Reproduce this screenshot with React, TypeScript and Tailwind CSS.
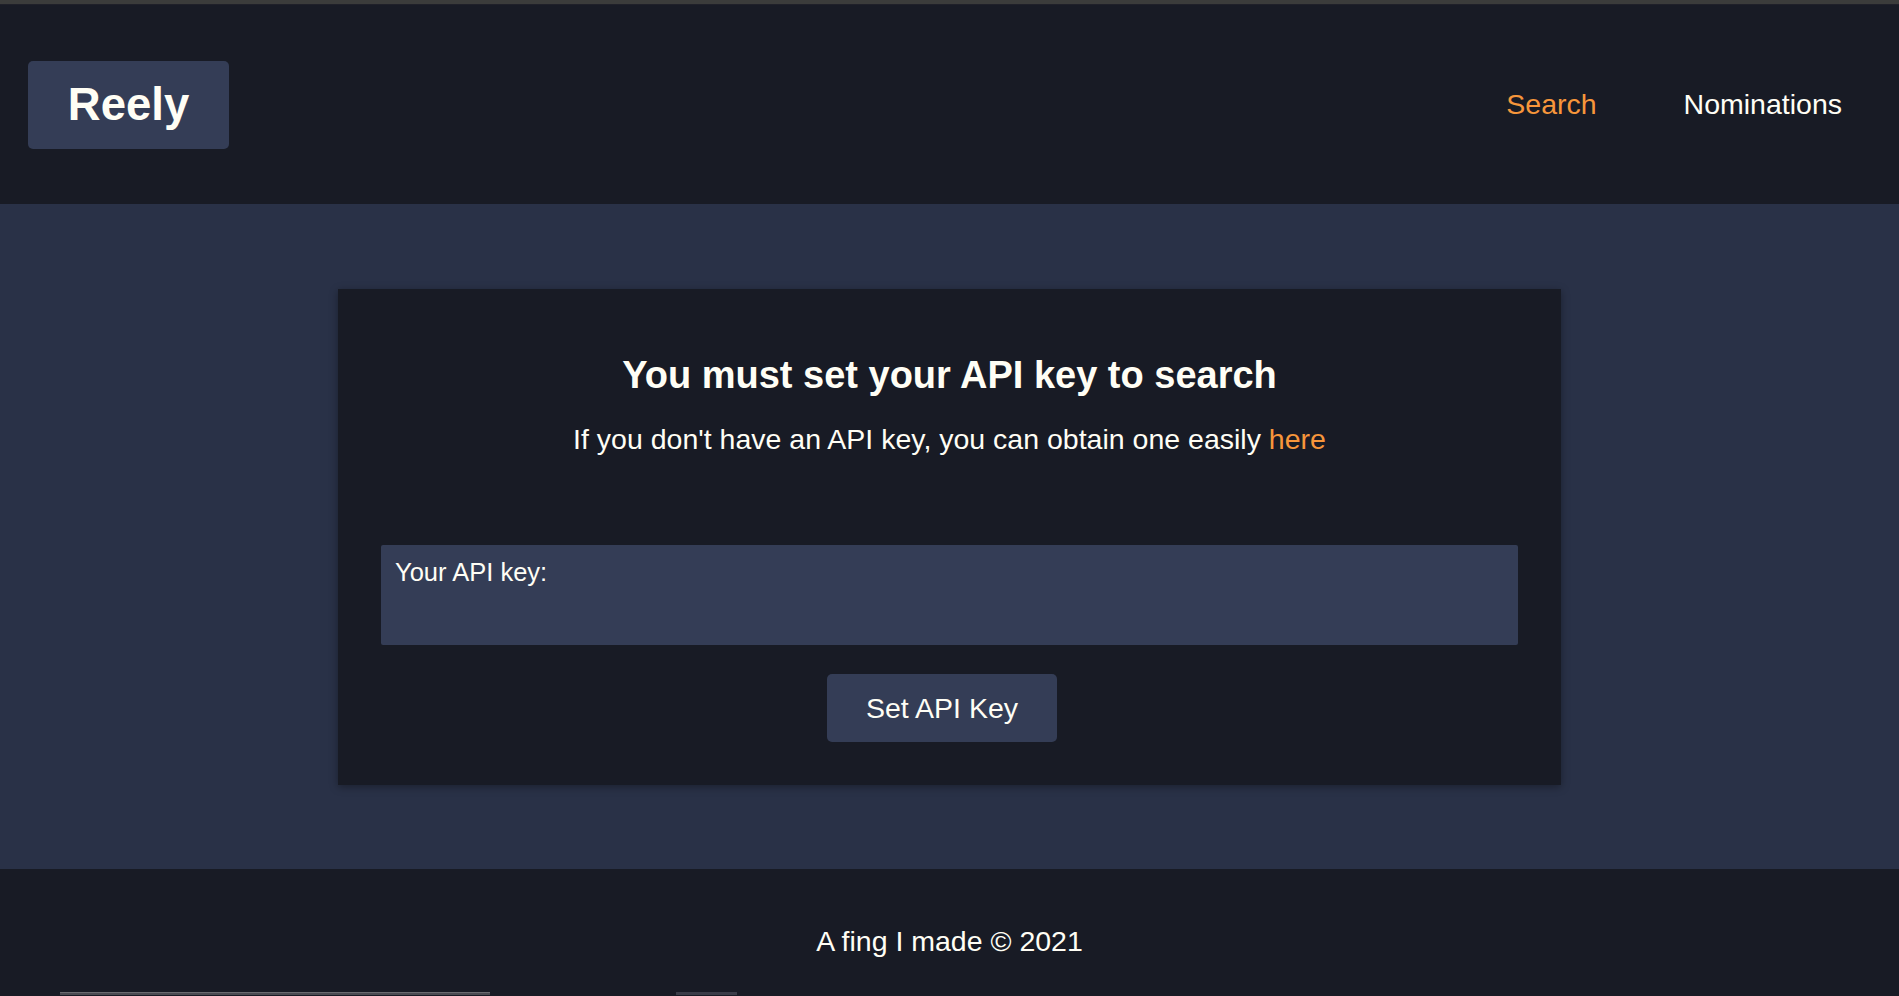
export default function App() {
  return (
    <div className="min-h-screen bg-[#181b25] text-[#fffef5] font-['Liberation_Sans',Arial,sans-serif]">
      {/* top strip */}
      <div className="h-[4px] bg-[#3b3c3b]" />
      <div className="h-[1px] bg-[#1f2029]" />

      {/* ===== HEADER ===== */}
      <header className="h-[199px] bg-[#181b25] flex items-center justify-between pl-[28px] pr-[57px]">
        <div className="w-[201px] h-[88px] mt-[1px] bg-[#343d56] rounded-[5px] flex items-center justify-center">
          <span className="text-[45.5px] font-bold leading-none">Reely</span>
        </div>
        <nav className="flex items-center gap-[87px] text-[28.5px]">
          <a className="text-[#f7963b]">Search</a>
          <a>Nominations</a>
        </nav>
      </header>

      {/* ===== MAIN ===== */}
      <main className="bg-[#293147] pt-[85px] pb-[84px] flex justify-center">
        <div className="w-[1223px] bg-[#181b25] shadow-[0_2px_8px_rgba(0,0,0,0.35)] px-[43px] pt-[64px] pb-[43px] flex flex-col">
          <h2 className="text-center text-[38px] font-bold leading-[44px]">
            You must set your API key to search
          </h2>
          <p className="text-center text-[28.5px] leading-[33px] mt-[26px]">
            If you don't have an API key, you can obtain one easily{" "}
            <a className="text-[#f7963b]">here</a>
          </p>
          <textarea
            placeholder="Your API key:"
            className="mt-[89px] h-[100px] w-full resize-none bg-[#343d56] rounded-[2px] px-[14px] py-[12px] text-[25.5px] leading-[30px] text-[#fffef5] placeholder:text-[#fffef5] outline-none"
          />
          <div className="flex justify-center mt-[29px]">
            <button className="mr-[15px] w-[230px] h-[68px] bg-[#343d56] rounded-[5px] text-[28.5px] text-[#fffef5]">
              Set API Key
            </button>
          </div>
        </div>
      </main>

      {/* ===== FOOTER ===== */}
      <footer className="bg-[#181b25] pt-[56px] pb-[35px] text-center text-[28.5px] leading-[32px]">
        A fing I made © 2021
      </footer>
      <div className="flex h-[3px]">
        <div className="ml-[60px] w-[430px] bg-[#4a4b52] border-t border-[#6a6b70]" />
        <div className="ml-[186px] w-[61px] bg-[#3a3c48]" />
      </div>
    </div>
  );
}
